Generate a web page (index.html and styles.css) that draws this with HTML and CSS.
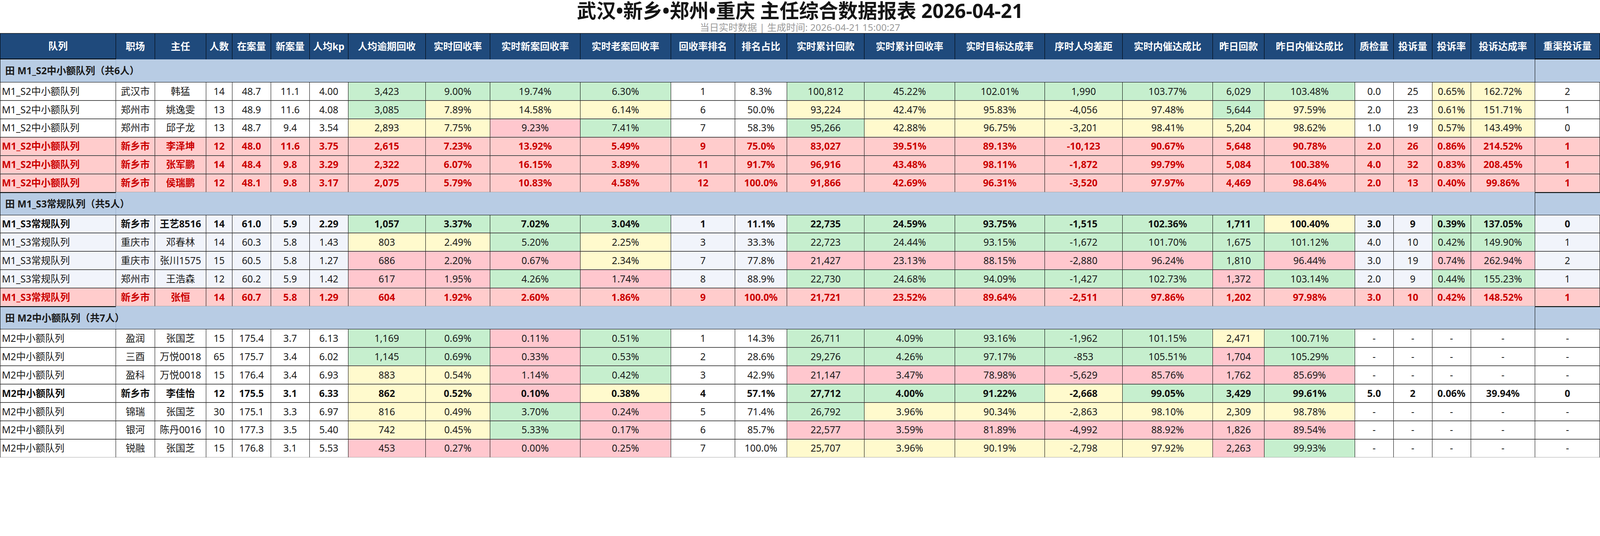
FILE: index.html
```html
<!DOCTYPE html>
<html lang="zh-CN">
<head>
<meta charset="utf-8">
<title>主任综合数据报表</title>
<link rel="stylesheet" href="styles.css">
</head>
<body>
<header class="report-head">
  <h1 class="report-title">武汉•新乡•郑州•重庆 主任综合数据报表 2026-04-21</h1>
  <p class="report-sub">当日实时数据 | 生成时间: 2026-04-21 15:00:27</p>
</header>
<div class="sheet">
<table class="grid">
  <colgroup>
    <col class="c1"><col class="c2"><col class="c3"><col class="c4"><col class="c5"><col class="c6"><col class="c7"><col class="c8"><col class="c9"><col class="c10"><col class="c11"><col class="c12"><col class="c13"><col class="c14"><col class="c15"><col class="c16"><col class="c17"><col class="c18"><col class="c19"><col class="c20"><col class="c21"><col class="c22"><col class="c23"><col class="c24"><col class="c25">
  </colgroup>
  <thead>
    <tr>
      <th class="first">队列</th><th>职场</th><th>主任</th><th>人数</th><th>在案量</th><th>新案量</th><th>人均kp</th><th>人均逾期回收</th><th>实时回收率</th><th>实时新案回收率</th><th>实时老案回收率</th><th>回收率排名</th><th>排名占比</th><th>实时累计回款</th><th>实时累计回收率</th><th>实时目标达成率</th><th>序时人均差距</th><th>实时内催达成比</th><th>昨日回款</th><th>昨日内催达成比</th><th>质检量</th><th>投诉量</th><th>投诉率</th><th>投诉达成率</th><th class="last">重渠投诉量</th>
    </tr>
  </thead>
  <tbody>
    <tr class="grp"><td class="g-label"><span class="g-text">田 M1_S2中小额队列（共6人）</span></td><td class="g-mid" colspan="23"></td><td class="g-last"></td></tr>
    <tr class="row"><td>M1_S2中小额队列</td><td>武汉市</td><td>韩猛</td><td>14</td><td>48.7</td><td>11.1</td><td>4.00</td><td class="g">3,423</td><td class="g">9.00%</td><td class="g">19.74%</td><td class="g">6.30%</td><td>1</td><td>8.3%</td><td class="g">100,812</td><td class="g">45.22%</td><td class="g">102.01%</td><td class="g">1,990</td><td class="g">103.77%</td><td class="g">6,029</td><td class="g">103.48%</td><td>0.0</td><td>25</td><td class="y">0.65%</td><td class="y">162.72%</td><td>2</td></tr>
    <tr class="row"><td>M1_S2中小额队列</td><td>郑州市</td><td>姚逸雯</td><td>13</td><td>48.9</td><td>11.6</td><td>4.08</td><td class="g">3,085</td><td class="y">7.89%</td><td class="y">14.58%</td><td class="y">6.14%</td><td>6</td><td>50.0%</td><td class="y">93,224</td><td class="y">42.47%</td><td class="y">95.83%</td><td class="y">-4,056</td><td class="y">97.48%</td><td class="g">5,644</td><td class="y">97.59%</td><td>2.0</td><td>23</td><td class="y">0.61%</td><td class="y">151.71%</td><td>1</td></tr>
    <tr class="row"><td>M1_S2中小额队列</td><td>郑州市</td><td>邱子龙</td><td>13</td><td>48.7</td><td>9.4</td><td>3.54</td><td class="y">2,893</td><td class="y">7.75%</td><td class="p">9.23%</td><td class="g">7.41%</td><td>7</td><td>58.3%</td><td class="g">95,266</td><td class="y">42.88%</td><td class="y">96.75%</td><td class="y">-3,201</td><td class="y">98.41%</td><td class="y">5,204</td><td class="y">98.62%</td><td>1.0</td><td>19</td><td class="y">0.57%</td><td class="y">143.49%</td><td>0</td></tr>
    <tr class="row warn"><td>M1_S2中小额队列</td><td>新乡市</td><td>李泽坤</td><td>12</td><td>48.0</td><td>11.6</td><td>3.75</td><td>2,615</td><td>7.23%</td><td>13.92%</td><td>5.49%</td><td>9</td><td>75.0%</td><td>83,027</td><td>39.51%</td><td>89.13%</td><td>-10,123</td><td>90.67%</td><td>5,648</td><td>90.78%</td><td>2.0</td><td>26</td><td>0.86%</td><td>214.52%</td><td>1</td></tr>
    <tr class="row warn"><td>M1_S2中小额队列</td><td>新乡市</td><td>张军鹏</td><td>14</td><td>48.4</td><td>9.8</td><td>3.29</td><td>2,322</td><td>6.07%</td><td>16.15%</td><td>3.89%</td><td>11</td><td>91.7%</td><td>96,916</td><td>43.48%</td><td>98.11%</td><td>-1,872</td><td>99.79%</td><td>5,084</td><td>100.38%</td><td>4.0</td><td>32</td><td>0.83%</td><td>208.45%</td><td>1</td></tr>
    <tr class="row warn"><td>M1_S2中小额队列</td><td>新乡市</td><td>侯瑞鹏</td><td>12</td><td>48.1</td><td>9.8</td><td>3.17</td><td>2,075</td><td>5.79%</td><td>10.83%</td><td>4.58%</td><td>12</td><td>100.0%</td><td>91,866</td><td>42.69%</td><td>96.31%</td><td>-3,520</td><td>97.97%</td><td>4,469</td><td>98.64%</td><td>2.0</td><td>13</td><td>0.40%</td><td>99.86%</td><td>1</td></tr>

    <tr class="grp after"><td class="g-label"><span class="g-text">田 M1_S3常规队列（共5人）</span></td><td class="g-mid" colspan="23"></td><td class="g-last"></td></tr>
    <tr class="row alt strong"><td>M1_S3常规队列</td><td>新乡市</td><td>王艺8516</td><td>14</td><td>61.0</td><td>5.9</td><td>2.29</td><td class="g">1,057</td><td class="g">3.37%</td><td class="g">7.02%</td><td class="g">3.04%</td><td>1</td><td>11.1%</td><td class="g">22,735</td><td class="g">24.59%</td><td class="g">93.75%</td><td class="g">-1,515</td><td class="g">102.36%</td><td class="g">1,711</td><td class="y">100.40%</td><td>3.0</td><td>9</td><td class="g">0.39%</td><td class="g">137.05%</td><td>0</td></tr>
    <tr class="row alt"><td>M1_S3常规队列</td><td>重庆市</td><td>邓春林</td><td>14</td><td>60.3</td><td>5.8</td><td>1.43</td><td class="y">803</td><td class="y">2.49%</td><td class="g">5.20%</td><td class="y">2.25%</td><td>3</td><td>33.3%</td><td class="g">22,723</td><td class="g">24.44%</td><td class="g">93.15%</td><td class="g">-1,672</td><td class="g">101.70%</td><td class="g">1,675</td><td class="g">101.12%</td><td>4.0</td><td>10</td><td class="g">0.42%</td><td class="g">149.90%</td><td>1</td></tr>
    <tr class="row alt"><td>M1_S3常规队列</td><td>重庆市</td><td>张川1575</td><td>15</td><td>60.5</td><td>5.8</td><td>1.27</td><td class="p">686</td><td class="p">2.20%</td><td class="p">0.67%</td><td class="y">2.34%</td><td>7</td><td>77.8%</td><td class="p">21,427</td><td class="p">23.13%</td><td class="p">88.15%</td><td class="p">-2,880</td><td class="p">96.24%</td><td class="g">1,810</td><td class="p">96.44%</td><td>3.0</td><td>19</td><td class="p">0.74%</td><td class="p">262.94%</td><td>2</td></tr>
    <tr class="row alt"><td>M1_S3常规队列</td><td>郑州市</td><td>王浩森</td><td>12</td><td>60.2</td><td>5.9</td><td>1.42</td><td class="p">617</td><td class="p">1.95%</td><td class="g">4.26%</td><td class="p">1.74%</td><td>8</td><td>88.9%</td><td class="g">22,730</td><td class="g">24.68%</td><td class="g">94.09%</td><td class="g">-1,427</td><td class="g">102.73%</td><td class="p">1,372</td><td class="g">103.14%</td><td>2.0</td><td>9</td><td class="g">0.44%</td><td class="g">155.23%</td><td>1</td></tr>
    <tr class="row warn"><td>M1_S3常规队列</td><td>新乡市</td><td>张恒</td><td>14</td><td>60.7</td><td>5.8</td><td>1.29</td><td>604</td><td>1.92%</td><td>2.60%</td><td>1.86%</td><td>9</td><td>100.0%</td><td>21,721</td><td>23.52%</td><td>89.64%</td><td>-2,511</td><td>97.86%</td><td>1,202</td><td>97.98%</td><td>3.0</td><td>10</td><td>0.42%</td><td>148.52%</td><td>1</td></tr>

    <tr class="grp after"><td class="g-label"><span class="g-text">田 M2中小额队列（共7人）</span></td><td class="g-mid" colspan="23"></td><td class="g-last"></td></tr>
    <tr class="row"><td>M2中小额队列</td><td>盈润</td><td>张国芝</td><td>15</td><td>175.4</td><td>3.7</td><td>6.13</td><td class="g">1,169</td><td class="g">0.69%</td><td class="p">0.11%</td><td class="g">0.51%</td><td>1</td><td>14.3%</td><td class="g">26,711</td><td class="g">4.09%</td><td class="g">93.16%</td><td class="g">-1,962</td><td class="g">101.15%</td><td class="y">2,471</td><td class="g">100.71%</td><td>-</td><td>-</td><td>-</td><td>-</td><td>-</td></tr>
    <tr class="row"><td>M2中小额队列</td><td>三酉</td><td>万悦0018</td><td>65</td><td>175.7</td><td>3.4</td><td>6.02</td><td class="g">1,145</td><td class="g">0.69%</td><td class="p">0.33%</td><td class="g">0.53%</td><td>2</td><td>28.6%</td><td class="g">29,276</td><td class="g">4.26%</td><td class="g">97.17%</td><td class="g">-853</td><td class="g">105.51%</td><td class="p">1,704</td><td class="g">105.29%</td><td>-</td><td>-</td><td>-</td><td>-</td><td>-</td></tr>
    <tr class="row"><td>M2中小额队列</td><td>盈科</td><td>万悦0018</td><td>15</td><td>176.4</td><td>3.4</td><td>6.93</td><td class="y">883</td><td class="y">0.54%</td><td class="p">1.14%</td><td class="g">0.42%</td><td>3</td><td>42.9%</td><td class="p">21,147</td><td class="p">3.47%</td><td class="p">78.98%</td><td class="p">-5,629</td><td class="p">85.76%</td><td class="p">1,762</td><td class="p">85.69%</td><td>-</td><td>-</td><td>-</td><td>-</td><td>-</td></tr>
    <tr class="row strong"><td>M2中小额队列</td><td>新乡市</td><td>李佳怡</td><td>12</td><td>175.5</td><td>3.1</td><td>6.33</td><td class="y">862</td><td class="y">0.52%</td><td class="p">0.10%</td><td class="y">0.38%</td><td>4</td><td>57.1%</td><td class="g">27,712</td><td class="g">4.00%</td><td class="g">91.22%</td><td class="y">-2,668</td><td class="g">99.05%</td><td class="g">3,429</td><td class="g">99.61%</td><td>5.0</td><td>2</td><td>0.06%</td><td>39.94%</td><td>0</td></tr>
    <tr class="row"><td>M2中小额队列</td><td>锦瑞</td><td>张国芝</td><td>30</td><td>175.1</td><td>3.3</td><td>6.97</td><td class="y">816</td><td class="y">0.49%</td><td class="g">3.70%</td><td class="p">0.24%</td><td>5</td><td>71.4%</td><td class="g">26,792</td><td class="y">3.96%</td><td class="y">90.34%</td><td class="y">-2,863</td><td class="y">98.10%</td><td class="y">2,309</td><td class="y">98.78%</td><td>-</td><td>-</td><td>-</td><td>-</td><td>-</td></tr>
    <tr class="row"><td>M2中小额队列</td><td>银河</td><td>陈丹0016</td><td>10</td><td>177.3</td><td>3.5</td><td>5.40</td><td class="y">742</td><td class="y">0.45%</td><td class="g">5.33%</td><td class="p">0.17%</td><td>6</td><td>85.7%</td><td class="p">22,577</td><td class="p">3.59%</td><td class="p">81.89%</td><td class="p">-4,992</td><td class="p">88.92%</td><td class="p">1,826</td><td class="p">89.54%</td><td>-</td><td>-</td><td>-</td><td>-</td><td>-</td></tr>
    <tr class="row"><td>M2中小额队列</td><td>锐融</td><td>张国芝</td><td>15</td><td>176.8</td><td>3.1</td><td>5.53</td><td class="p">453</td><td class="p">0.27%</td><td class="p">0.00%</td><td class="p">0.25%</td><td>7</td><td>100.0%</td><td class="y">25,707</td><td class="y">3.96%</td><td class="y">90.19%</td><td class="y">-2,798</td><td class="y">97.92%</td><td class="p">2,263</td><td class="g">99.93%</td><td>-</td><td>-</td><td>-</td><td>-</td><td>-</td></tr>
  </tbody>
</table>
</div>
</body>
</html>
```

FILE: styles.css
```css
/* Sizes are expressed relative to the viewport width (1vw = 1/100 of the page width). */
html, body {
  margin: 0;
  padding: 0;
  background: #ffffff;
}

body {
  font-family: "Noto Sans", "Noto Sans CJK SC", sans-serif;
  color: #1a1a1a;
  overflow: hidden;
}

.report-head {
  text-align: center;
}

.report-title {
  margin: 0;
  font-size: 1.22vw;
  line-height: 1.333vw;
  font-weight: 700;
  color: #141414;
}

.report-sub {
  margin: 0;
  font-size: 0.595vw;
  line-height: 0.729vw;
  color: #9a9a9a;
}

.sheet {
  border-top: 1px solid #cfcfcf;
}

.grid {
  width: 100%;
  table-layout: fixed;
  border-collapse: separate;
  border-spacing: 0;
}

.c1 { width: 7.25%; }
.c2 { width: 2.4375%; }
.c3 { width: 3.2083%; }
.c4 { width: 1.625%; }
.c5, .c6, .c7 { width: 2.4167%; }
.c8 { width: 4.8333%; }
.c9 { width: 4.0417%; }
.c10 { width: 5.625%; }
.c11 { width: 5.6667%; }
.c12 { width: 4.0208%; }
.c13 { width: 3.2292%; }
.c14 { width: 4.8542%; }
.c15 { width: 5.6458%; }
.c16 { width: 5.625%; }
.c17 { width: 4.8542%; }
.c18 { width: 5.6458%; }
.c19 { width: 3.2292%; }
.c20 { width: 5.6458%; }
.c21, .c22, .c23 { width: 2.4167%; }
.c24 { width: 4.0208%; }
.c25 { width: 4.0417%; }

.grid thead tr {
  height: 1.625vw;
}

.grid th {
  padding: 0;
  background: #1f4a7c;
  color: #ffffff;
  font-size: 0.604vw;
  font-weight: 700;
  line-height: 1.2;
  white-space: nowrap;
  text-align: center;
  border-top: 1px solid #000;
  border-right: 1px solid #000;
}

.grid th:first-child {
  border-left: 1px solid #000;
}

.grid th.first,
.grid th.last {
  border-bottom: 2px solid #000;
}

.row {
  height: 1.1458vw;
}

.grid td {
  padding: 0;
  font-size: 0.604vw;
  line-height: 1.2;
  white-space: nowrap;
  text-align: center;
  vertical-align: middle;
}

.row td {
  background: #ffffff;
  border-top: 1px solid #000;
  border-bottom: 1px solid #a8a8a8;
  border-right: 1px solid #000;
}

.row td:first-child {
  border-left: 1px solid #000;
  text-align: left;
  padding-left: 0.09vw;
}

.row.alt td {
  background: #f1f4fb;
}

.row td.g { background: #c6efce; }
.row td.y { background: #fffacd; }
.row td.p { background: #ffc7ce; }

.row.strong td {
  font-weight: 700;
  color: #111;
}

.row.warn td {
  background: #ffcccc;
  color: #cc0000;
  font-weight: 700;
}

.grp {
  height: 1.4167vw;
}

.grp td {
  background: #b8cce4;
  font-weight: 700;
  color: #1a1a1a;
}

.grp td.g-label {
  overflow: visible;
  text-align: left;
  padding-left: 0.3vw;
  border-left: 1px solid #000;
  border-right: 1px solid #98acc9;
}

.grp td.g-mid {
  border-right: 1px solid #000;
}

.grp.after td.g-label,
.grp.after td.g-last {
  border-top: 2px solid #000;
}

.g-text {
  white-space: nowrap;
}
```
